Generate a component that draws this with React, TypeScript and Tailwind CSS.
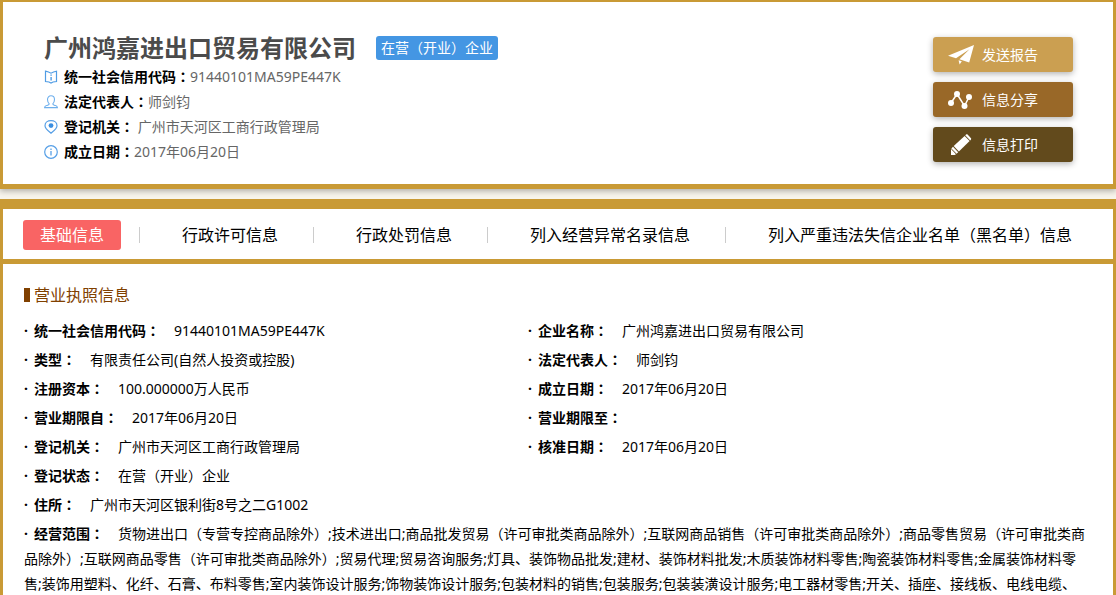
import type { ReactNode } from "react";

const BookIcon = () => (
  <svg width="14" height="14" viewBox="0 0 14 14" fill="none" stroke="#4f9ce4" strokeWidth="1.2" aria-hidden="true">
    <path d="M1.5 1.2 4.5 2 7 3.2 9.5 2 12.5 1.2V11.5L9 12 7 13 5 12 1.5 11.5Z" />
    <path d="M7.1 4.5V5.8M7.1 7V10.6" strokeWidth="1.4" />
  </svg>
);

const PersonIcon = () => (
  <svg width="14" height="14" viewBox="0 0 14 14" fill="none" stroke="#6eafec" strokeWidth="1.1" aria-hidden="true">
    <path d="M5.2 8.8C3.9 7.7 3.5 6.2 3.5 4.6 3.5 2.3 5 .8 7 .8S10.5 2.3 10.5 4.6C10.5 6.2 10.1 7.7 8.8 8.8 8.8 10.2 10 10 11.5 10.6 12.7 11 13.3 11.6 13.4 12.6H.6C.7 11.6 1.3 11 2.5 10.6 4 10 5.2 10.2 5.2 8.8Z" />
  </svg>
);

const PinIcon = () => (
  <svg width="14" height="14" viewBox="0 0 14 14" fill="none" stroke="#569fe6" strokeWidth="1.2" aria-hidden="true">
    <path d="M7 13.2C5.2 11.6 1 8.8 1 5.7 1 2.6 3.7.7 7 .7S13 2.6 13 5.7C13 8.8 8.8 11.6 7 13.2Z" />
    <circle cx="7" cy="5.6" r="2.4" fill="#3b8ee0" stroke="none" />
  </svg>
);

const InfoIcon = () => (
  <svg width="14" height="14" viewBox="0 0 14 14" fill="none" stroke="#569fe6" strokeWidth="1.2" aria-hidden="true">
    <circle cx="7" cy="7" r="6.3" />
    <path d="M7 3.6V5M7 6.1V10.6" strokeWidth="1.3" />
  </svg>
);

const PlaneIcon = () => (
  <svg width="26" height="20" viewBox="0 0 26 20" fill="#fff" aria-hidden="true">
    <path d="M26 0 0 10.8 8 13.2 21.5 4.2 11.4 14.2 21.2 17.4Z" />
    <path d="M10.6 15.2 13.8 16.3 11.6 19.6Z" />
  </svg>
);

const NodesIcon = () => (
  <svg width="26" height="20" viewBox="0 0 26 20" fill="#fff" aria-hidden="true">
    <path d="M3 13 9 4 16.5 16 21 7" fill="none" stroke="#fff" strokeWidth="1.5" />
    <circle cx="3" cy="13" r="3" />
    <circle cx="9" cy="4" r="3" />
    <circle cx="16.5" cy="16" r="3" />
    <circle cx="21" cy="7" r="3" />
  </svg>
);

const PencilIcon = () => (
  <svg width="26" height="22" viewBox="0 0 26 22" fill="#fff" aria-hidden="true">
    <path d="M3 15 8 20.2 6.6 21H3Z" />
    <path d="M3.4 14.4 5 12.8 10.2 18.2 8.6 19.7Z" />
    <path d="M5.7 12.1 16.6 1.9 21.6 7.1 10.9 17.5Z" />
    <path d="M17.2 1.3 18.4.3Q19 0 19.6.5L23 4.2Q23.4 4.8 23 5.4L22.2 6.5Z" />
  </svg>
);

const Colon = () => (
  <span lang="ja" className="font-['Noto_Sans_CJK_JP',sans-serif]">
    ：
  </span>
);

function Summary({ icon, label, children }: { icon: ReactNode; label: string; children: ReactNode }) {
  return (
    <div className="flex items-center text-sm leading-[25px]">
      <span className="mr-1.5">{icon}</span>
      <dt className="font-bold text-black">
        {label}
        <Colon />
      </dt>
      <dd className="text-[#666]">{children}</dd>
    </div>
  );
}

function Field({ label, wide, children }: { label: string; wide?: boolean; children?: ReactNode }) {
  return (
    <div className={wide ? "col-span-2" : ""}>
      <dt className="mr-3.5 inline font-bold">
        <span className="inline-block w-2.5">·</span>
        {label}
        <Colon />
      </dt>
      <dd className="inline">{children}</dd>
    </div>
  );
}

const tabs = ["基础信息", "行政许可信息", "行政处罚信息", "列入经营异常名录信息", "列入严重违法失信企业名单（黑名单）信息"];

const actions = [
  { text: "发送报告", icon: <PlaneIcon />, color: "bg-[#cb9f51]" },
  { text: "信息分享", icon: <NodesIcon />, color: "bg-[#996828]" },
  { text: "信息打印", icon: <PencilIcon />, color: "bg-[#624a1c]" },
];

export default function App() {
  return (
    <div
      lang="zh-CN"
      className="flex min-h-screen flex-col gap-2.5 bg-[#f8f5ec] font-['Noto_Sans','Noto_Sans_CJK_SC',sans-serif] text-black"
    >
      <header className="flex items-start justify-between border-x-[3px] border-t-2 border-b-[5px] border-[#c99a35] bg-white pt-[30px] pr-10 pb-5 pl-[41px] shadow-[0_2px_6px_rgba(0,0,0,0.3)]">
        <div>
          <div className="flex h-8 items-center gap-5">
            <h1 className="text-2xl leading-8 font-bold text-[#4b4b4b]">广州鸿嘉进出口贸易有限公司</h1>
            <span className="h-6 rounded-[3px] bg-[#4496e3] px-[5px] text-sm leading-6 text-white">在营（开业）企业</span>
          </div>
          <dl>
            <Summary icon={<BookIcon />} label="统一社会信用代码">91440101MA59PE447K</Summary>
            <Summary icon={<PersonIcon />} label="法定代表人">师剑钧</Summary>
            <Summary icon={<PinIcon />} label="登记机关">&nbsp;广州市天河区工商行政管理局</Summary>
            <Summary icon={<InfoIcon />} label="成立日期">2017年06月20日</Summary>
          </dl>
        </div>
        <div className="flex flex-col gap-2.5 pt-[5px]">
          {actions.map((a) => (
            <button
              key={a.text}
              type="button"
              className={`flex h-[35px] w-[140px] items-center gap-2 rounded-[3px] pl-[15px] text-sm text-white shadow-[0_2px_6px_rgba(0,0,0,0.3)] ${a.color}`}
            >
              {a.icon}
              {a.text}
            </button>
          ))}
        </div>
      </header>

      <main className="grow border-x-[3px] border-t-10 border-[#c99a35] bg-white">
        <nav className="flex h-[55px] items-center border-b-[5px] border-[#c99a35] pt-0.5 pl-5 text-base whitespace-nowrap">
          {tabs.map((t, i) => (
            <div key={t} className="flex items-center">
              {i > 0 && <span className="mr-[25px] ml-[18px] h-4 w-px bg-[#ccc]" />}
              <a
                href="#license"
                className={`rounded-[3px] px-[17px] leading-[30px] ${i === 0 ? "bg-[#f96464] text-white" : ""}`}
              >
                {t}
              </a>
            </div>
          ))}
        </nav>

        <section id="license" className="pt-[19px] pr-7 pl-[21px]">
          <h2 className="flex items-center gap-1 text-base leading-6 text-[#804000]">
            <span className="h-3.5 w-1.5 bg-[#804000]" />
            营业执照信息
          </h2>
          <dl className="mt-[11px] grid grid-cols-[504px_1fr] gap-y-1 text-sm leading-[25px]">
            <Field label="统一社会信用代码">91440101MA59PE447K</Field>
            <Field label="企业名称">广州鸿嘉进出口贸易有限公司</Field>
            <Field label="类型">有限责任公司(自然人投资或控股)</Field>
            <Field label="法定代表人">师剑钧</Field>
            <Field label="注册资本">100.000000万人民币</Field>
            <Field label="成立日期">2017年06月20日</Field>
            <Field label="营业期限自">2017年06月20日</Field>
            <Field label="营业期限至" />
            <Field label="登记机关">广州市天河区工商行政管理局</Field>
            <Field label="核准日期">2017年06月20日</Field>
            <Field label="登记状态" wide>在营（开业）企业</Field>
            <Field label="住所" wide>广州市天河区银利街8号之二G1002</Field>
            <Field label="经营范围" wide>
              货物进出口（专营专控商品除外）;技术进出口;商品批发贸易（许可审批类商品除外）;互联网商品销售（许可审批类商品除外）;商品零售贸易（许可审批类商品除外）;互联网商品零售（许可审批类商品除外）;贸易代理;贸易咨询服务;灯具、装饰物品批发;建材、装饰材料批发;木质装饰材料零售;陶瓷装饰材料零售;金属装饰材料零售;装饰用塑料、化纤、石膏、布料零售;室内装饰设计服务;饰物装饰设计服务;包装材料的销售;包装服务;包装装潢设计服务;电工器材零售;开关、插座、接线板、电线电缆、
            </Field>
          </dl>
        </section>
      </main>
    </div>
  );
}
